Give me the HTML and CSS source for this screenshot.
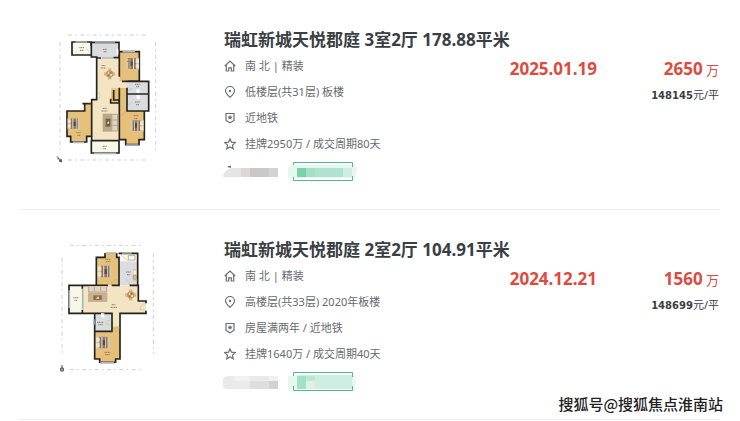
FILE: index.html
```
<!DOCTYPE html>
<html lang="zh-CN">
<head>
    <meta charset="UTF-8">
    <meta name="viewport" content="width=device-width, initial-scale=1.0">
    <title>成交房源</title>
    <link rel="stylesheet" href="styles.css">
</head>
<body>
    <!-- Shared icons -->
    <svg class="sprite" width="0" height="0">
        <symbol id="icon-home" viewBox="0 0 12 12">
            <path d="M.8 6 6 1l5.200 5M2.300 5v6h2.400V7.800h2.600V11h2.400V5"/>
        </symbol>
        <symbol id="icon-pin" viewBox="0 0 12 12">
            <path d="M6 11.300C3.500 9 1.500 7.200 1.500 5a4.500 4.500 0 0 1 9 0c0 2.200-2 4-4.500 6.300z"/>
            <circle class="dot" cx="6" cy="5" r="1.200"/>
        </symbol>
        <symbol id="icon-tag" viewBox="0 0 12 12">
            <path d="M2 1.500h8v7L6 10.800 2 8.500z"/>
            <path class="dot" d="m6 3 .8 1.500 1.700.2-1.200 1.200.3 1.700L6 6.800l-1.600.8.3-1.700-1.200-1.200 1.700-.2z"/>
        </symbol>
        <symbol id="icon-star" viewBox="0 0 12 12">
            <path d="m6 .9 1.500 3.300 3.700.4-2.700 2.500.7 3.700L6 9l-3.200 1.800.7-3.700L.8 4.600l3.700-.4z"/>
        </symbol>
        <symbol id="bed" viewBox="0 0 40 36">
            <path fill="#d9c6a4" d="M0 0h40v36H0z"/>
            <path fill="#8a7460" d="M10 2h23v32H10z"/>
            <path fill="#eee3d0" d="M1 5h10v11H1zM1 20h10v11H1zM16 2h3v32h-3zM27 2h2v32h-2z"/>
            <path fill="#584838" d="M20 12h6v13h-6z"/>
        </symbol>
        <symbol id="table" viewBox="0 0 34 34">
            <path fill="#dcb984" d="M12 0h10v8H12zM12 26h10v8H12zM0 12h8v10H0zM26 12h8v10h-8z"/>
            <circle cx="17" cy="17" r="11" fill="#c39a66"/>
            <path fill="#e9dcc1" d="M12 10h4v6h-4zM19 17h5v6h-5z"/>
            <path fill="#8a6d50" d="M17 12h5v3h-5zM11 19h5v3h-5z"/>
        </symbol>
    </svg>

    <main class="list">
        <article class="item">
            <svg class="plan" viewBox="0 0 345 420" role="img" aria-label="3室2厅户型图">
                <g class="ruler">
                    <path d="M54 30h242M54 405h232M30 52v332M317 52v332"/>
                </g>
                <path class="wood" d="M208 80h60v90h-60zM52 258h52v-22h21v98h-15v17H62v-17H52zM208 188h24v70h51v86h-16v15h-40v-15h-19z"/>
                <path class="tile" d="M141 101h66v71h28v17h-27v158h-83V224h16z"/>
                <path class="bath" d="M125 53h81v45h-81zM231 169h65v37h-65zM231 208h65v50h-65z"/>
                <path class="balcony" d="M66 52h58v38H66zM125 350h82v34h-82z"/>
                <path class="wood" d="M183 190h24v43h-24z"/>
                <path class="wall" d="M124 90H66V51h57v12M124 51v45h16v128h-15v125M124 52h83v46M207 98h-17M140 99h13M208 94V80h60v14M268 80v88h-36M208 94v61M216 169h80v89h-13v86h-16v15h-40v-15h-19V188M231 188v70h65M232 207h63M104 236v22H51v76h11v17h48v-17h14M97 236h28M207 344v40h-83v-37h83M191 195v30h16v9h-25v-13"/>
                <path class="glass" d="M76 51h36M135 51h60M218 80h37M69 352h33M228 360h37M132 385h66M154 99h36"/>
                <path class="door" d="M124 80c-9 0-14-5-14-13M209 155l15 14M141 201c12 0 12 22 0 22M124 236c-12 0-18 6-20 15M209 272c9 0 14-5 15-13M232 200l14-10M232 244l14-14"/>
                <use href="#bed" x="52" y="278" width="38" height="36"/>
                <use href="#bed" transform="rotate(180 134 67)" x="0" y="0" width="40" height="36"/>
                <use href="#bed" transform="rotate(180 141 160)" x="0" y="0" width="42" height="36"/>
                <use href="#table" x="162" y="130" width="34" height="34"/>
                <path fill="#b9a68b" d="M158 266h30v54h-30z"/>
                <path fill="#e2d5bd" d="M188 268h16v50h-16z"/>
                <path class="sofa" d="M188 268h15v50h-15M188 285h15M188 301h15"/>
                <path fill="#78603f" d="M167 281h14v24h-14z"/>
                <path fill="#f2e5cb" d="m170 295 7-8v10z"/>
                <path fill="#fff" d="M260 193h9v10h-9zM260 211h9v11h-9zM200 73h5v16h-5z"/>
                <g class="note">
                    <path d="M88 68h14M90 76h11M159 73h12M161 80h9M154 122h12M152 129h15M233 101h12M231 109h15M255 178h16M258 185h9M255 231h16M258 239h9M158 250h12M155 258h17M79 323h13M82 331h10M251 272h14M253 280h9M158 364h12M160 371h8"/>
                </g>
                <path class="north" d="m21 394 13 15M22 402l5-1M27 408l8 3-1-8z"/>
            </svg>
            <div class="info">
                <h2>瑞虹新城天悦郡庭 3室2厅 178.88平米</h2>
                <ul>
                    <li><svg class="icon"><use href="#icon-home"/></svg>南 北 | 精装</li>
                    <li><svg class="icon"><use href="#icon-pin"/></svg>低楼层(共31层) 板楼</li>
                    <li><svg class="icon"><use href="#icon-tag"/></svg>近地铁</li>
                    <li><svg class="icon"><use href="#icon-star"/></svg>挂牌2950万 / 成交周期80天</li>
                </ul>
                <svg class="agent" viewBox="0 0 135 19" aria-hidden="true">
                    <path fill="#777" d="M5 5q2-2 4-1v2z"/>
                    <path fill="#e6e5e5" d="M9 6h10v9H1q0-6 8-9z"/>
                    <path fill="#ddd8d5" d="M19 6h9v9h-9z"/>
                    <path fill="#c9c9c9" d="M28 6h19v9H28z"/>
                    <path fill="#d3d3d3" d="M47 6h9v9h-9z"/>
                    <path fill="#e7f7f0" d="M68 3h65l2 6-2 7H66V6z"/>
                    <path class="frame" d="M71.500 3V.5h59V5M71.500 15v3.500h59V14"/>
                    <path fill="#78d2ab" d="M75 6h9v9h-9z"/>
                    <path fill="#a5dfc7" d="M84 6h9v9h-9z"/>
                    <path fill="#b1e1cf" d="M93 6h28v9H93z"/>
                    <path fill="#cdeee0" d="M121 6h9v9h-9z"/>
                </svg>
            </div>
            <time class="date" datetime="2025-01-19">2025.01.19</time>
            <div class="price">
                <p class="total"><strong>2650</strong> 万</p>
                <p class="unit"><strong>148145</strong>元/平</p>
            </div>
        </article>

        <article class="item">
            <svg class="plan" viewBox="0 0 345 420" role="img" aria-label="2室2厅户型图">
                <g class="ruler">
                    <path d="M60 31h222M60 404h222M36 68v288M310 55v300"/>
                </g>
                <path class="wood" d="M141 65h25V54h34v11h6v85h-65zM135 289h51v-15h24v98h-14v10h-47v-10h-14z"/>
                <path class="tile" d="M98 151h168v47h22v36h-79v40h-23v-40H98z"/>
                <path class="bath" d="M207 79h56v71h-56zM135 235h50v54h-50z"/>
                <path class="balcony" d="M58 151h39v83H58zM207 55h56v24h-56z"/>
                <path class="wall" d="M165 54v13h-26v84H57v84h77v137h15v11M200 54v13h7v84h-22M139 151h35M206 55h57v98M250 151h15v47h23v7M288 227v8h-78v137h-13v11M97 151v10M97 224v10M134 235h52v54h-51M134 289h52v-16M239 151h11"/>
                <path class="wall" d="M148 382h48"/>
                <path class="glass" d="M166 54h33M58 166v53M98 161v60M151 383h41M216 54h29M132 253v16"/>
                <path class="door" d="M184 151c0-12 8-17 18-17M239 151c0-13-6-17-12-16M288 206c-12 0-18 8-18 17l18 3M185 256c-10 0-18 2-18 9l18 8M210 275c-2 9-9 16-18 16M214 61l20 16M186 289l17-14"/>
                <use href="#bed" x="142" y="90" width="44" height="39"/>
                <use href="#bed" x="137" y="303" width="43" height="39"/>
                <use href="#table" x="225" y="163" width="34" height="34"/>
                <path fill="#c4b296" d="M114 173h58v28h-58z"/>
                <path fill="#e2d5bd" d="M115 154h55v18h-55z"/>
                <path class="sofa" d="M116 154v17h54v-17M133 154v14M152 154v14"/>
                <path fill="#936b3e" d="M130 181h25v14h-25z"/>
                <path fill="#f2e5cb" d="m137 191 8-7 3 7z"/>
                <path fill="#d9c98e" d="M249 102h11v36h-11z"/>
                <path fill="#fff" d="M251 107h6v11h-6zM153 235h10v12h-10zM235 62h20v13h-20z"/>
                <path class="sofa" d="M235 62h20v13h-20zM250 122h9v10h-9z"/>
                <g class="note">
                    <path d="M166 73h16M168 80h13M228 111h14M231 119h10M70 188h16M73 196h10M185 209h11M182 217h19M141 262h20M145 269h13M163 352h18M165 359h14"/>
                </g>
                <path class="north" d="M36 390v18M32 408v-9h8v9z"/>
            </svg>
            <div class="info">
                <h2>瑞虹新城天悦郡庭 2室2厅 104.91平米</h2>
                <ul>
                    <li><svg class="icon"><use href="#icon-home"/></svg>南 北 | 精装</li>
                    <li><svg class="icon"><use href="#icon-pin"/></svg>高楼层(共33层) 2020年板楼</li>
                    <li><svg class="icon"><use href="#icon-tag"/></svg>房屋满两年 / 近地铁</li>
                    <li><svg class="icon"><use href="#icon-star"/></svg>挂牌1640万 / 成交周期40天</li>
                </ul>
                <svg class="agent" viewBox="0 0 135 19" aria-hidden="true">
                    <path fill="#eaeaea" d="M5 4h51v13H5q-4 0-4-4V8q0-4 4-4z"/>
                    <path fill="#f1f1f1" d="M12 4h16v5H12zM47 4h9v5h-9z"/>
                    <path fill="#dedede" d="M28 9h19v8H28z"/>
                    <path fill="#d2d2d2" d="M47 9h9v8h-9z"/>
                    <path fill="#e7f7f0" d="M66 4h66l2 6-2 7H66z"/>
                    <path class="frame" d="M71.500 4V.5h59V5M71.500 14v4.500h59V14"/>
                    <path fill="#cdeee0" d="M75 3h55v14H75z"/>
                    <path fill="#a1e1c5" d="M75 4h9v13h-9z"/>
                    <path fill="#b9e8d4" d="M84 4h9v5h-9z"/>
                    <path fill="#dcf2e8" d="M84 9h9v8h-9z"/>
                </svg>
            </div>
            <time class="date" datetime="2024-12-21">2024.12.21</time>
            <div class="price">
                <p class="total"><strong>1560</strong> 万</p>
                <p class="unit"><strong>148699</strong>元/平</p>
            </div>
        </article>
    </main>

    <div class="watermark">搜狐号@搜狐焦点淮南站</div>
</body>
</html>
```

FILE: styles.css
```
* {
    box-sizing: border-box;
}

body {
    margin: 0;
    position: relative;
    background-color: #fff;
    color: #666b6e;
    font-family: "Noto Sans", "Noto Sans CJK SC", sans-serif;
    font-size: 11px;
}

h2, p, ul {
    margin: 0;
    padding: 0;
}

.sprite {
    position: absolute;
}

.list {
    padding: 0 20px 0 18px;
}

.item {
    display: flex;
    align-items: flex-start;
    padding: 25px 1px 28px 32px;
    border-bottom: 1px solid #f0f0f0;
}

.plan {
    flex: none;
    width: 115px;
    height: 140px;
    margin-right: 59px;
}

.info {
    flex: 1;
    padding-top: 2px;
}

.info h2 {
    color: #394043;
    font-size: 17px;
    line-height: 26px;
    white-space: nowrap;
}

.info ul {
    list-style: none;
}

.info li {
    display: flex;
    align-items: center;
    gap: 9px;
    line-height: 26px;
    white-space: nowrap;
}

.icon {
    width: 12px;
    height: 12px;
    fill: none;
    stroke: #6b7073;
    stroke-width: 1.2;
}

.dot {
    fill: #6b7073;
    stroke: none;
}

.agent {
    display: block;
    width: 135px;
    height: 19px;
    margin: 5px 0 0 -2px;
}

.frame {
    fill: none;
    stroke: #4dbb8c;
}

.date {
    padding-top: 32px;
    color: #dd4b3e;
    font-size: 17px;
    font-weight: bold;
    line-height: 24px;
}

.price {
    width: 125px;
    padding-top: 32px;
    text-align: right;
}

.total {
    color: #dd4b3e;
    font-size: 13px;
    line-height: 24px;
}

.total strong {
    font-size: 17px;
}

.unit {
    color: #394043;
    line-height: 26px;
}

.unit strong {
    font-family: "DejaVu Sans", sans-serif;
    font-size: 10px;
}

/* Floor plans */
.wood { fill: #e6bf78; }
.tile { fill: #f3e5c4; }
.bath { fill: #dadddf; }
.balcony { fill: #f8f8ea; }

.wall, .glass, .door, .ruler, .sofa, .note, .north {
    fill: none;
}

.wall {
    stroke: #252320;
    stroke-width: 5;
}

.glass {
    stroke: #aeb3b5;
    stroke-width: 5;
}

.door {
    stroke: #b19a79;
    stroke-width: 1;
}

.sofa {
    stroke: #9d8870;
    stroke-width: 2;
}

.ruler {
    stroke: #cfcfcf;
    stroke-width: 3;
    stroke-dasharray: 12 9 5 11;
}

.note {
    stroke: #8a7f70;
    stroke-width: 3;
    stroke-dasharray: 4 1;
}

.north {
    stroke: #555;
    stroke-width: 3;
}

.watermark {
    position: absolute;
    right: 17px;
    bottom: 4px;
    color: #222;
    font-family: "Noto Sans CJK SC", sans-serif;
    font-size: 15px;
    font-weight: 500;
    line-height: 24px;
    text-shadow: 1px 1px 0 #fff, -1px -1px 0 #fff;
}
```
